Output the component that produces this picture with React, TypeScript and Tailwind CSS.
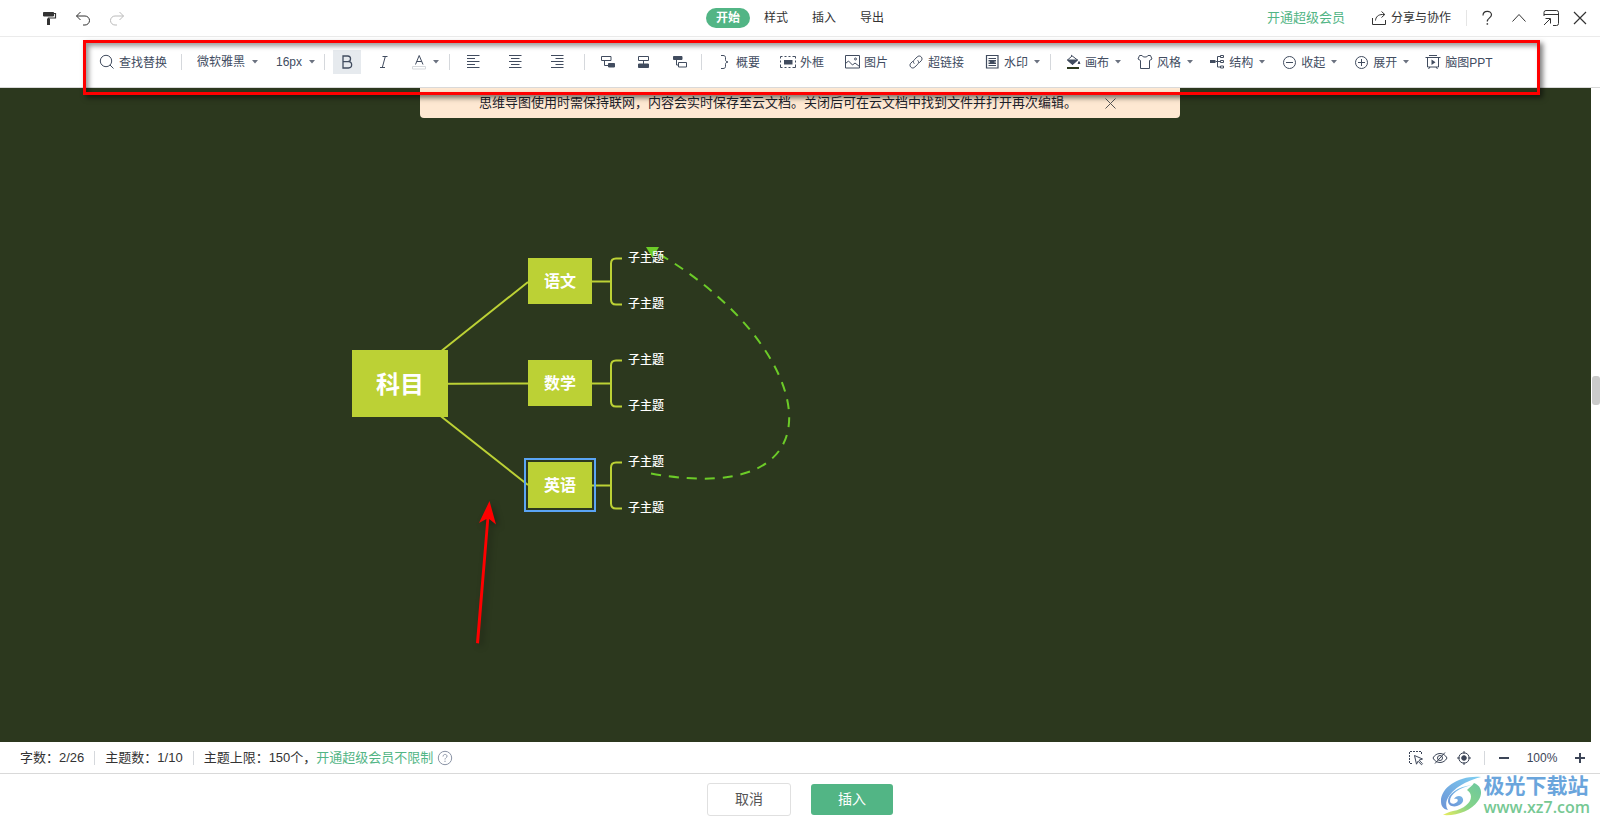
import { clsx } from 'clsx';
import { type ReactNode, useState } from 'react';

const Icon = ({
  children,
  className,
  strokeWidth = 1,
}: {
  children: ReactNode;
  className?: string;
  strokeWidth?: number;
}) => (
  <svg
    aria-hidden="true"
    className={clsx('size-4 shrink-0', className)}
    fill="none"
    stroke="currentColor"
    strokeWidth={strokeWidth}
    viewBox="0 0 16 16"
  >
    {children}
  </svg>
);

const Caret = () => (
  <svg aria-hidden="true" className="h-1 w-2 shrink-0" viewBox="0 0 8 4">
    <path d="M1 0h6L4 3.4z" fill="#6b7280" />
  </svg>
);

const Divider = ({ className }: { className?: string }) => (
  <span className={clsx('h-4 w-px shrink-0 bg-[#d5d8dc]', className)} />
);

const ToolButton = ({
  icon,
  label,
  menu = false,
}: {
  icon: ReactNode;
  label: string;
  menu?: boolean;
}) => (
  <button
    aria-haspopup={menu ? 'menu' : undefined}
    className="flex shrink-0 items-center gap-1 whitespace-nowrap"
    type="button"
  >
    {icon}
    <span className={clsx('pt-px', menu && 'pr-px')}>{label}</span>
    {menu && <Caret />}
  </button>
);

const IconButton = ({
  label,
  children,
  className,
}: {
  label: string;
  children: ReactNode;
  className?: string;
}) => (
  <button
    aria-label={label}
    className={clsx('flex shrink-0 items-center justify-center', className)}
    type="button"
  >
    {children}
  </button>
);

const ToolSelect = ({
  label,
  options,
  className,
}: {
  label: string;
  options: string[];
  className: string;
}) => (
  <label className="flex shrink-0 items-center">
    <span className="sr-only">{label}</span>
    <select className={clsx('h-6 appearance-none bg-transparent leading-6', className)}>
      {options.map((option) => (
        <option key={option}>{option}</option>
      ))}
    </select>
    <Caret />
  </label>
);

const tabs = ['开始', '样式', '插入', '导出'];

const Header = () => {
  const [activeTab, setActiveTab] = useState('开始');

  return (
    <header className="grid h-[37px] shrink-0 grid-cols-[1fr_auto_1fr] items-center border-b border-[#ebebeb] text-xs text-[#333]">
      <div className="flex items-center gap-[18px] pl-[41px]">
        <IconButton label="格式刷">
          <Icon>
            <path d="M2.500 2.500h10v3.500h-10z" fill="currentColor" />
            <path d="M12.500 3.500H14.500v4.500H7.500v2" strokeWidth={1.2} />
            <path d="M6 8.500h3v6.500h-3z" fill="currentColor" stroke="none" />
          </Icon>
        </IconButton>
        <IconButton label="撤销">
          <Icon>
            <path d="M5.500 2L1.500 6l4 4M1.500 6h8.500a4.500 4.500 0 0 1 0 9H8" />
          </Icon>
        </IconButton>
        <IconButton className="text-[#bbb]" label="重做">
          <Icon>
            <path d="M10.500 2l4 4l-4 4M14.500 6H6a4.500 4.500 0 0 0 0 9h2" />
          </Icon>
        </IconButton>
      </div>

      <nav className="flex items-center gap-1">
        {tabs.map((tab) => (
          <button
            className={clsx(
              'h-5 w-11 rounded-full',
              tab === activeTab && 'bg-[#52b585] font-bold text-white',
            )}
            key={tab}
            onClick={() => setActiveTab(tab)}
            type="button"
          >
            {tab}
          </button>
        ))}
      </nav>

      <div className="flex items-center justify-end pr-3">
        <a className="mr-[26px] text-[13px] text-[#52b585]" href="#vip">
          开通超级会员
        </a>
        <ToolButton
          icon={
            <Icon>
              <path d="M1.500 8v6.500h13V10" />
              <path d="M4.500 10.500c.3-3.500 2.500-6 7-6h2M10.500 1.500l3.300 3l-3.300 3" />
            </Icon>
          }
          label="分享与协作"
        />
        <Divider className="mr-3 ml-[15px] bg-[#e5e5e5]" />
        <IconButton label="帮助">
          <Icon>
            <path d="M4 5.500c0-5.500 8.500-5.500 8.500-.7c0 3-4.200 3.200-4.200 6.700" strokeWidth={1.2} />
            <path d="M7.600 13.200h1.500v1.500h-1.500z" fill="currentColor" stroke="none" />
          </Icon>
        </IconButton>
        <IconButton className="ml-4" label="折叠">
          <Icon>
            <path d="M1.500 11.500l6.500-7l6.500 7" />
          </Icon>
        </IconButton>
        <IconButton className="ml-4" label="还原窗口">
          <Icon>
            <path d="M1 6V2.500a2 2 0 0 1 2-2h10.500a2 2 0 0 1 2 2v11a2 2 0 0 1-2 2H10M1 4.500h14.500M1 15l6-6M2.500 8.500h5v5" />
          </Icon>
        </IconButton>
        <IconButton className="ml-[13px]" label="关闭">
          <Icon>
            <path d="M2 2l12 12M14 2L2 14" strokeWidth={1.2} />
          </Icon>
        </IconButton>
      </div>
    </header>
  );
};

const Toolbar = () => (
  <div className="flex h-[51px] shrink-0 items-center border-b border-[#d9d9d9] pl-[99px] text-xs text-[#414c5f]">
    <ToolButton
      icon={
        <Icon>
          <circle cx="7" cy="7" r="5.700" />
          <path d="M11 11l3.500 3.500" />
        </Icon>
      }
      label="查找替换"
    />
    <Divider className="mr-[15px] ml-[14px]" />
    <ToolSelect className="w-[54px]" label="字体" options={['微软雅黑', '宋体', '黑体']} />
    <span className="w-[17px] shrink-0" />
    <ToolSelect className="w-8" label="字号" options={['16px', '18px', '24px']} />
    <Divider className="mx-2" />
    <IconButton className="h-6 w-7 bg-[#e6eaee]" label="加粗">
      <Icon>
        <path d="M4 2h4.700a2.800 2.800 0 0 1 0 5.700H4zM4 7.700h5.500a3.100 3.100 0 0 1 0 6.300H4z" strokeWidth={1.3} />
      </Icon>
    </IconButton>
    <IconButton className="ml-[15px]" label="斜体">
      <Icon>
        <path d="M6.500 2.500h5M4 13.500h5M9.300 2.500l-3 11" />
      </Icon>
    </IconButton>
    <button
      aria-haspopup="menu"
      aria-label="字体颜色"
      className="ml-[19px] flex shrink-0 items-center gap-[5px]"
      type="button"
    >
      <Icon>
        <path d="M4.500 10.500L8.200 1.500L12 10.500M5.700 7.500h5" />
        <path d="M1.500 12.500h13v2.500h-13z" fill="#fff" stroke="#d5d8dc" />
      </Icon>
      <Caret />
    </button>
    <Divider className="mr-[15px] ml-[9px]" />

    <div className="flex gap-[26px]">
      <IconButton label="左对齐">
        <Icon>
          <path d="M2 1.500h12.500M2 4.500h8M2 7.500h12.500M2 10.500h8M2 13.500h12.500" />
        </Icon>
      </IconButton>
      <IconButton label="居中对齐">
        <Icon>
          <path d="M2 1.500h12.500M4 4.500h8.500M2 7.500h12.500M4 10.500h8.500M2 13.500h12.500" />
        </Icon>
      </IconButton>
      <IconButton label="右对齐">
        <Icon>
          <path d="M2 1.500h12.500M6.500 4.500h8M2 7.500h12.500M6.500 10.500h8M2 13.500h12.500" />
        </Icon>
      </IconButton>
    </div>
    <Divider className="mr-[15px] ml-[19px]" />

    <div className="flex gap-5">
      <IconButton label="插入子主题">
        <Icon>
          <path d="M1.500 2.500h9.500v4h-9.500zM4.500 6.500v5H8" />
          <path d="M8.500 9.500h6v3.500h-6z" fill="currentColor" />
        </Icon>
      </IconButton>
      <IconButton label="插入同级主题">
        <Icon>
          <path d="M2.500 2.500h10v4h-10zM7.500 6.500v4" />
          <path d="M2.500 10h10v3.500h-10z" fill="currentColor" />
        </Icon>
      </IconButton>
      <IconButton label="插入父主题">
        <Icon>
          <path d="M1.500 2.500h8.500v3h-8.500z" fill="currentColor" />
          <path d="M4.500 5.500v5.500H6.500M6.500 8.500h8v4.500h-8z" />
        </Icon>
      </IconButton>
    </div>
    <Divider className="mr-[14px] ml-[13px]" />

    <div className="flex gap-5">
      <ToolButton
        icon={
          <Icon>
            <path d="M5 1.500h2c1.800 0 2.500.8 2.500 2.200v2c0 1.300.7 2 2.500 2.300c-1.800.3-2.500 1-2.500 2.300v2c0 1.400-.7 2.200-2.500 2.200h-2" />
          </Icon>
        }
        label="概要"
      />
      <ToolButton
        icon={
          <Icon>
            <path d="M.5 4.500v-2h2M4.500 2.500h2M8.500 2.500h2M12.500 2.500h3v2M15.500 6.500v2M15.500 10.500v3h-3M10.500 13.500h-2M6.500 13.500h-2M2.500 13.500h-2v-3M.5 8.500v-2" />
            <path d="M4 6h8.500v4.500H4z" fill="currentColor" stroke="none" />
          </Icon>
        }
        label="外框"
      />
      <ToolButton
        icon={
          <Icon>
            <path d="M1.500 1.500h14v12.500h-14z" />
            <path d="M1.500 9.500l3-2.500l4 4l2.500-2l4.500 3.500" />
            <circle cx="11.500" cy="5" r="1" />
          </Icon>
        }
        label="图片"
      />
      <ToolButton
        icon={
          <Icon>
            <path d="M6.300 9.700c-1.300-1.300-1.100-2.800 0-3.900l2.900-2.900c1.200-1.200 2.900-1.200 4 0s1.100 2.800 0 3.900l-2 2" />
            <path d="M9.700 6.300c1.300 1.300 1.100 2.800 0 3.900l-2.900 2.900c-1.200 1.200-2.900 1.200-4 0s-1.100-2.800 0-3.900l2-2" />
          </Icon>
        }
        label="超链接"
      />
      <ToolButton
        icon={
          <Icon>
            <path d="M2.500 1.500h11.500v12.500h-11.500z" strokeWidth={1.2} />
            <path d="M4.500 4.500h7.500M4.500 11.500h7.500" />
            <path d="M4.500 6h7.500v1.500h-1.500v1h1.500v1.500h-7.500v-1.500h1.500v-1h-1.500z" fill="currentColor" stroke="none" />
          </Icon>
        }
        label="水印"
        menu
      />
    </div>
    <Divider className="mr-[14px] ml-[9px]" />

    <div className="flex gap-[15px]">
      <ToolButton
        icon={
          <Icon>
            <path d="M6 1l6.500 5l-5 4.500l-5-4.500l4.500-4" />
            <path d="M2.500 6h10l-5 4.500zM14 7.500l1 2h-2z" fill="currentColor" />
            <path d="M2 14h12" stroke="#2c381e" strokeWidth={2} />
          </Icon>
        }
        label="画布"
        menu
      />
      <ToolButton
        icon={
          <Icon>
            <path d="M5 1.500c.5 2 5.500 2 6 0h2.500l1.500 3.500l-2.500 1.500v8h-9v-8L1 5l1.500-3.500z" />
          </Icon>
        }
        label="风格"
        menu
      />
      <ToolButton
        icon={
          <Icon>
            <path d="M1 6h5.500v3H1z" fill="currentColor" stroke="none" />
            <path d="M6.500 7.500h5M11 2.500H8.500v10.500H11M11.500 1.500h3v2h-3zM11.500 6.500h3v2h-3zM11.500 12h3v2h-3z" />
          </Icon>
        }
        label="结构"
        menu
      />
      <ToolButton
        icon={
          <Icon>
            <circle cx="8.500" cy="8.500" r="6" />
            <path d="M5 8.500h7" />
          </Icon>
        }
        label="收起"
        menu
      />
      <ToolButton
        icon={
          <Icon>
            <circle cx="8.500" cy="8.500" r="6" />
            <path d="M5 8.500h7M8.500 5v7" />
          </Icon>
        }
        label="展开"
        menu
      />
      <ToolButton
        icon={
          <Icon>
            <path d="M4 1.500h8M.5 3.500h15M2.500 3.500v9.500h11v-9.500M5 13l-1.500 2M11 13l1.500 2" />
            <path d="M6.500 5.500l4 2.700l-4 2.800z" fill="currentColor" stroke="none" />
          </Icon>
        }
        label="脑图PPT"
      />
    </div>
  </div>
);

const topics = [
  { title: '语文', node: 'top-[170px]', children: ['top-[161px]', 'top-[207px]'] },
  { title: '数学', node: 'top-[272px]', children: ['top-[263px]', 'top-[309px]'] },
  { title: '英语', node: 'top-[374px]', children: ['top-[365px]', 'top-[411px]'], selected: true },
];

const MindMap = () => (
  <div className="absolute inset-0">
    <svg aria-hidden="true" className="absolute inset-0 size-full" fill="none">
      <g stroke="#bcd135" strokeWidth={2}>
        <path d="M400 296L528 194M400 296L528 295.500M400 296L528 397" />
        <path d="M592 193.500h19M622 170.500h-6q-5 0-5 5v36q0 5 5 5h6" />
        <path d="M592 295.500h19M622 272.500h-6q-5 0-5 5v36q0 5 5 5h6" />
        <path d="M592 397.500h19M622 374.500h-6q-5 0-5 5v36q0 5 5 5h6" />
      </g>
      <path
        d="M651 385.500C856 422.500 813 252 652 162"
        stroke="#6ccb28"
        strokeDasharray="10 8"
        strokeWidth={2}
      />
      <path d="M646 159h13l-6.500 11z" fill="#6ccb28" />
    </svg>

    <div className="absolute top-[262px] left-[352px] flex h-[67px] w-24 items-center justify-center bg-[#bcd135] pt-0.5 text-2xl font-bold text-white">
      科目
    </div>

    {topics.map((topic) => (
      <div key={topic.title}>
        <div
          className={clsx(
            'absolute left-[528px] flex h-[46px] w-16 items-center justify-center bg-[#bcd135] pt-0.5 text-base font-bold text-white',
            topic.node,
            topic.selected && 'outline-2 outline-offset-2 outline-[#5aa5f5]',
          )}
        >
          {topic.title}
        </div>
        {topic.children.map((position) => (
          <div
            className={clsx(
              'absolute left-[628px] text-xs leading-[18px] font-medium text-white',
              position,
            )}
            key={position}
          >
            子主题
          </div>
        ))}
      </div>
    ))}

    {/* pointer towards the selected topic */}
    <svg
      aria-hidden="true"
      className="absolute inset-0 size-full drop-shadow-[3px_3px_3px_rgba(0,0,0,0.3)]"
    >
      <path d="M489.500 413L496 436.500L489.200 431L479 555.500L476 555L486.400 431L479 435z" fill="#f00" />
    </svg>
  </div>
);

const Canvas = () => (
  <main className="flex min-h-[520px] flex-1">
    <div className="relative flex flex-1 items-start justify-center overflow-hidden bg-[#2c381e] pl-[9px]">
      <MindMap />
      <div className="relative flex h-[30px] w-[760px] items-center justify-between rounded-b bg-[#fee8d2] pr-[62px] pl-[59px] text-[13px] text-[#1d2129]">
        <p className="whitespace-nowrap">
          思维导图使用时需保持联网，内容会实时保存至云文档。关闭后可在云文档中找到文件并打开再次编辑。
        </p>
        <IconButton label="关闭提示">
          <Icon className="text-[#555]">
            <path d="M3.500 3.500l10 10M13.500 3.500l-10 10" />
          </Icon>
        </IconButton>
      </div>
    </div>
    <div className="flex w-[9px] shrink-0 flex-col items-end justify-center bg-white">
      <span className="mb-[50px] h-[29px] w-2 rounded-[3px] bg-[#cbcbcb]" />
    </div>
  </main>
);

const StatusBar = () => (
  <div className="flex h-8 shrink-0 items-center justify-between border-b border-[#d9d9d9] pr-3 pl-5 text-[13px] text-[#333]">
    <div className="flex items-center gap-[10px]">
      <span>字数：2/26</span>
      <Divider className="h-[14px]" />
      <span>主题数：1/10</span>
      <Divider className="h-[14px]" />
      <span className="flex items-center">
        主题上限：150个，
        <a className="text-[#52b585]" href="#vip">
          开通超级会员不限制
        </a>
        <IconButton className="ml-1 text-[#8a93a5]" label="主题上限说明">
          <Icon>
            <circle cx="8" cy="8" r="6.700" />
            <path d="M6 6.500c0-2.700 4-2.700 4-.3c0 1.500-2 1.600-2 3.300M8 10.700v1.300" />
          </Icon>
        </IconButton>
      </span>
    </div>
    <div className="flex items-center gap-2 text-[#3c4557]">
      <IconButton label="框选">
        <Icon>
          <path d="M1.500 2v12M2 1.500h12M13.500 2v3M2 13.500h3" strokeDasharray="2 1" />
          <path d="M6.500 5.500l8 3.500l-3.500 1.200l3.500 3.500l-1 1l-3.500-3.500l-1.500 3z" />
        </Icon>
      </IconButton>
      <IconButton label="隐藏">
        <Icon>
          <path d="M1 8c3-6 11-6 14 0c-3 6-11 6-14 0zM13 2.500l-10 11" />
          <circle cx="8" cy="8" r="2.500" />
        </Icon>
      </IconButton>
      <IconButton label="定位中心">
        <Icon>
          <circle cx="8" cy="8" r="5.200" />
          <circle cx="8" cy="8" fill="currentColor" r="2.300" />
          <path d="M8 1v3M8 12v3M1 8h3M12 8h3" />
        </Icon>
      </IconButton>
      <Divider className="mr-[3px] ml-1 h-[14px]" />
      <IconButton label="缩小">
        <Icon>
          <path d="M3 8h10" strokeWidth={2} />
        </Icon>
      </IconButton>
      <span className="mx-1 w-9 text-center text-xs">100%</span>
      <IconButton label="放大">
        <Icon>
          <path d="M3 8h10M8 3v10" strokeWidth={2} />
        </Icon>
      </IconButton>
    </div>
  </div>
);

const Footer = () => (
  <footer className="flex h-[50px] shrink-0 items-center justify-center gap-5 text-sm">
    <button
      className="h-[33px] w-[84px] rounded-[3px] border border-[#e0e0e0] text-[#555]"
      type="button"
    >
      取消
    </button>
    <button className="h-[31px] w-[82px] rounded-[3px] bg-[#52b585] text-white" type="button">
      插入
    </button>
  </footer>
);

const Watermark = () => (
  <div className="absolute right-[10px] bottom-[7px] flex items-center gap-[2px]">
    <svg aria-hidden="true" className="h-10 w-[42px]" fill="none" viewBox="0 0 42 40">
      <defs>
        <linearGradient id="swirl-blue" x1="0" x2="1" y1="1" y2="0">
          <stop offset="0" stopColor="#6b93d6" />
          <stop offset="1" stopColor="#7fd0f2" />
        </linearGradient>
        <linearGradient id="swirl-green" x1="0" x2="1" y1="1" y2="0">
          <stop offset="0" stopColor="#eaec5c" />
          <stop offset="0.45" stopColor="#86d487" />
          <stop offset="1" stopColor="#6cc7a0" />
        </linearGradient>
      </defs>
      <path d="M41 1C20-1 1 11 1 25c0 5 2 8 7 9C2 26 11 9 41 1z" fill="url(#swirl-blue)" />
      <path
        d="M32 9C17 11 8 18 8 25c0 6 8 7 13 3c4-3 2-8-2-8c-2 0-4 1-5 3c3-1 5 1 3 3c-3 3-7 2-7-1c0-7 9-13 22-16z"
        fill="url(#swirl-blue)"
      />
      <path d="M34 7C42 10 43 18 38 25C31 35 17 40 3 39c3-2 6-3 10-4C29 32 36 20 27 14c3-3 5-4 7-7z" fill="url(#swirl-green)" />
    </svg>
    <div className="flex flex-col">
      <span className="text-[21px] leading-[22px] font-bold text-[#6aa5dc]">极光下载站</span>
      <span className="font-['Open_Sans',sans-serif] text-base leading-5 font-semibold text-[#76c893]">
        www.xz7.com
      </span>
    </div>
  </div>
);

export default function App() {
  return (
    <div className="relative flex min-h-screen flex-col overflow-hidden bg-white font-['Liberation_Sans','Noto_Sans_CJK_SC',sans-serif]">
      <Header />
      <Toolbar />
      <Canvas />
      <StatusBar />
      <Footer />
      <Watermark />
      {/* highlight around the toolbar */}
      <div className="pointer-events-none absolute top-10 right-[60px] left-[83px] h-[55px] border-3 border-[#f00] shadow-[3px_3px_5px_rgba(0,0,0,0.5),inset_3px_3px_5px_rgba(0,0,0,0.4)]" />
    </div>
  );
}
